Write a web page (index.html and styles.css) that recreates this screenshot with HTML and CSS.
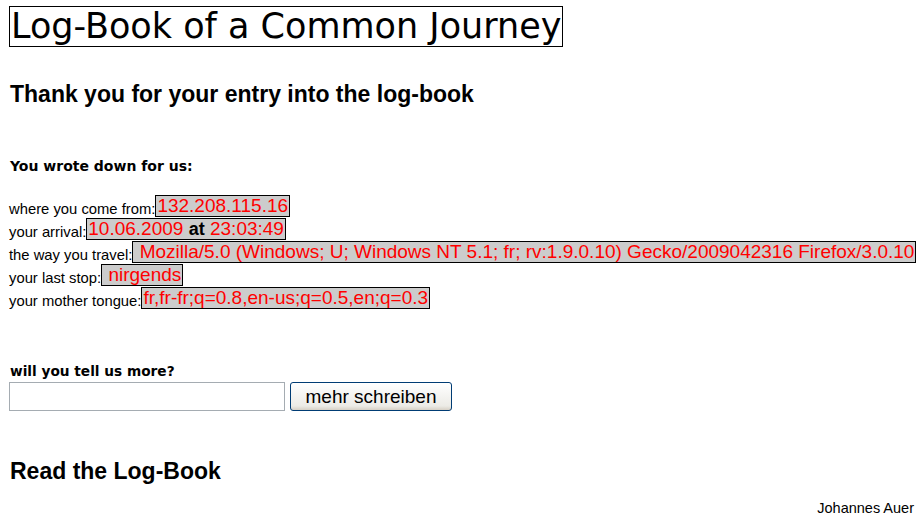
FILE: index.html
```html
<!DOCTYPE html>
<html lang="en">
<head>
    <meta charset="UTF-8">
    <title>Log-Book of a Common Journey</title>
    <link rel="stylesheet" href="styles.css">
</head>
<body>
    <h1 class="title">Log-Book of a Common Journey</h1>

    <h2>Thank you for your entry into the log-book</h2>

    <h3 class="wrote">You wrote down for us:</h3>

    <div class="entries">
        <div class="entry">where you come from:<span class="val">132.208.115.16</span></div>
        <div class="entry">your arrival:<span class="val">10.06.2009 <b class="at">at</b> 23:03:49</span></div>
        <div class="entry">the way you travel:<span class="val">&nbsp;Mozilla/5.0 (Windows; U; Windows NT 5.1; fr; rv:1.9.0.10) Gecko/2009042316 Firefox/3.0.10</span></div>
        <div class="entry">your last stop:<span class="val">&nbsp;nirgends</span></div>
        <div class="entry">your mother tongue:<span class="val">fr,fr-fr;q=0.8,en-us;q=0.5,en;q=0.3</span></div>
    </div>

    <form class="more" onsubmit="return false;">
        <label for="more" class="more-label">will you tell us more?</label>
        <div class="more-row">
            <input type="text" id="more" class="more-input">
            <button type="submit" class="more-btn">mehr schreiben</button>
        </div>
    </form>

    <h2 class="read">Read the Log-Book</h2>

    <div class="author">Johannes Auer</div>
</body>
</html>
```

FILE: styles.css
```css
body {
    margin: 0;
    padding: 6px 7px 0 9px;
    font-family: "Liberation Sans", Arial, sans-serif;
    color: #000;
    background: #fff;
}
.title {
    display: inline-block;
    margin: 0;
    padding: 0 1px;
    border: 1px solid #000;
    font-family: "DejaVu Sans", Verdana, sans-serif;
    font-weight: normal;
    font-size: 35px;
    line-height: 39px;
}
h2 {
    margin: 34px 0 0 1px;
    font-size: 23px;
    line-height: 27px;
    font-weight: bold;
}
.wrote {
    margin: 49px 0 0 1px;
    font-family: "DejaVu Sans", Verdana, sans-serif;
    font-size: 14px;
    line-height: 18px;
}
.entries {
    margin-top: 19px;
}
.entry {
    font-size: 14.8px;
    height: 23px;
    display: flex;
    align-items: flex-end;
    white-space: nowrap;
}
.val {
    display: inline-block;
    background: #ccc;
    border: 1px solid #000;
    color: #f00;
    font-size: 19px;
    line-height: 20px;
    padding: 0 1px;
}
.at {
    color: #000;
    font-size: 18px;
}
.more {
    margin-top: 53px;
}
.more-label {
    display: block;
    margin-left: 1px;
    font-family: "DejaVu Sans", Verdana, sans-serif;
    font-weight: bold;
    font-size: 13.7px;
    line-height: 18px;
}
.more-row {
    display: flex;
    gap: 5px;
    margin-top: 2px;
}
.more-input {
    width: 276px;
    height: 29px;
    box-sizing: border-box;
    border: 1px solid #a5acb2;
    margin: 0;
}
.more-btn {
    width: 162px;
    height: 29px;
    box-sizing: border-box;
    border: 1px solid #003c74;
    border-radius: 3px;
    background: linear-gradient(#fff, #ecebe6 85%, #d6d0c5);
    font-family: "Liberation Sans", Arial, sans-serif;
    font-size: 19px;
    color: #000;
    margin: 0;
}
.read {
    margin-top: 47px;
}
.author {
    text-align: right;
    font-size: 14.5px;
    margin-top: 15px;
}
```
